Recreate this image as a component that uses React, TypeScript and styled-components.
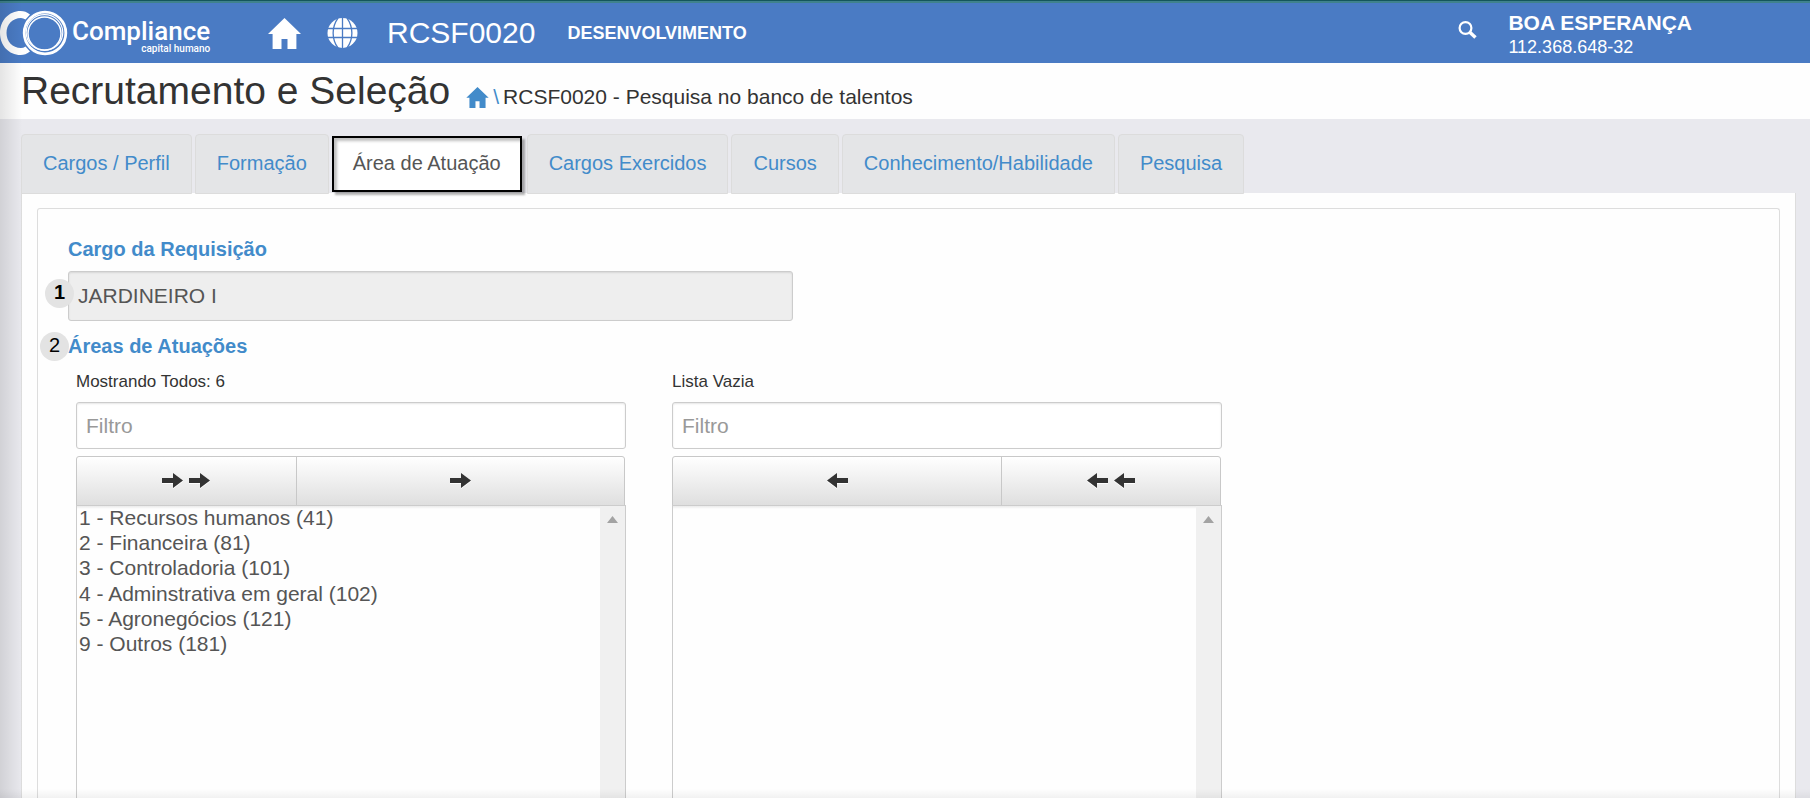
import React, { useState } from "react";
import styled, { createGlobalStyle, css } from "styled-components";

const GlobalStyle = createGlobalStyle`
  *, *::before, *::after { box-sizing: border-box; }
  body {
    margin: 0;
    background: #e9e9ee;
    color: #333;
    font-family: "Liberation Sans", Arial, sans-serif;
  }
  button, input, select { font-family: inherit; }
`;

const Page = styled.div`
  position: relative;
  display: flex;
  flex-direction: column;
  height: 100vh;
  overflow: hidden;
`;

/* Soft shade along the left and bottom edges of the window */
const EdgeShade = styled.div`
  position: absolute;
  inset: 0;
  pointer-events: none;
  background:
    linear-gradient(to right, rgba(0, 0, 0, 0.1), rgba(0, 0, 0, 0) 22px),
    linear-gradient(to top, rgba(0, 0, 0, 0.05), rgba(0, 0, 0, 0) 9px);
`;

const TopStrip = styled.div`
  flex: none;
  height: 3px;
  background: #3f828c;
  border-top: 1px solid #14565c;
`;

const Header = styled.header`
  flex: none;
  display: flex;
  align-items: center;
  height: 60px;
  padding-right: 118px;
  background: #4a7bc4;
  color: #fff;
`;

const Brand = styled.a`
  display: flex;
  align-items: center;
  gap: 4px;
  width: 268px;
  color: #fff;
  text-decoration: none;
`;

const BrandText = styled.span`
  display: flex;
  flex-direction: column;
  align-items: flex-end;
  padding-top: 5px;
  font-family: Roboto, "Liberation Sans", sans-serif;
  font-weight: 500;
`;

const BrandName = styled.span`
  font-size: 26px;
  line-height: 26px;
`;

const BrandTag = styled.span`
  font-size: 10px;
  line-height: 10px;
`;

const IconLink = styled.a`
  display: flex;
  color: inherit;
`;

const HeaderLinks = styled.nav`
  display: flex;
  align-items: center;
  gap: 26px;
  margin-right: 29px;
`;

const ProgramCode = styled.span`
  margin-right: 32px;
  font-size: 30px;
  line-height: 36px;
`;

const Environment = styled.strong`
  font-size: 18px;
  line-height: 24px;
`;

const UserArea = styled.div`
  display: flex;
  align-items: flex-start;
  gap: 31px;
  margin-left: auto;
  padding-top: 4px;
`;

const SearchButton = styled.button`
  display: flex;
  margin: 0;
  padding: 10px 0 0;
  border: 0;
  background: none;
  color: inherit;
`;

const UserInfo = styled.div`
  display: flex;
  flex-direction: column;
`;

const UserName = styled.strong`
  font-size: 21px;
  line-height: 24px;
`;

const UserDoc = styled.span`
  font-size: 18px;
  line-height: 24px;
`;

const TitleBar = styled.div`
  flex: none;
  display: flex;
  align-items: baseline;
  gap: 16px;
  height: 56px;
  padding-left: 21px;
  background: #fefefe;
`;

const Title = styled.h1`
  margin: 0;
  font-size: 39px;
  font-weight: 400;
  line-height: 56px;
`;

const Breadcrumb = styled.nav`
  display: flex;
  align-items: baseline;
  gap: 4px;
  font-size: 21px;
  color: #333;
`;

const CrumbLink = styled.a`
  color: #428bca;
  text-decoration: none;
  display: flex;
  align-items: baseline;
  gap: 4px;
  svg { align-self: center; }
`;

const Content = styled.main`
  flex: 1;
  display: flex;
  flex-direction: column;
  min-height: 0;
  padding: 15px 14px 0 21px;
`;

const Tabs = styled.div`
  flex: none;
  display: flex;
  align-items: center;
  gap: 3px;
  height: 60px;
  margin-bottom: -1px;
  z-index: 1;
`;

const Tab = styled.button<{ $active: boolean }>`
  height: 60px;
  margin: 0;
  padding: 0 21px 2px;
  border: 1px solid #dcdcdc;
  border-radius: 4px 4px 0 0;
  background: #e4e5e7;
  color: #428bca;
  font-size: 20px;
  line-height: 28px;
  white-space: nowrap;
  ${(p) =>
    p.$active &&
    css`
      height: 56px;
      margin-right: 2px;
      padding: 0 19px 2px;
      border: 2px solid #000;
      border-radius: 0;
      background: #fff;
      color: #555;
      box-shadow: 3px 3px 2px rgba(0, 0, 0, 0.3), inset 3px 3px 3px rgba(0, 0, 0, 0.25);
    `}
`;

const TabPanel = styled.section`
  flex: 1;
  display: flex;
  min-height: 0;
  padding: 15px 15px 0;
  border: solid #ddd;
  border-width: 0 1px;
  background: #fefefe;
`;

const Form = styled.form`
  flex: 1;
  display: flex;
  flex-direction: column;
  min-height: 0;
  padding: 26px 30px 0;
  border: solid #ddd;
  border-width: 1px 1px 0;
  border-radius: 3px 3px 0 0;
`;

const FieldLabel = styled.label`
  position: relative;
  align-self: flex-start;
  color: #428bca;
  font-size: 20px;
  font-weight: 700;
  line-height: 28px;
`;

const GroupHeading = styled(FieldLabel).attrs({ as: "h2" })`
  margin: 11px 0 10px;
`;

const FieldBox = styled.div`
  position: relative;
  display: flex;
  max-width: 725px;
  margin-top: 8px;
`;

const TextInput = styled.input`
  width: 100%;
  height: 47px;
  margin: 0;
  padding: 0 9px;
  border: 1px solid #ccc;
  border-radius: 3px;
  background: #fff;
  box-shadow: inset 0 1px 2px rgba(0, 0, 0, 0.1);
  color: #555;
  font-size: 21px;
  &::placeholder { color: #999; opacity: 1; }
  &:read-only { height: 50px; background: #eee; }
`;

const Badge = styled.span<{ $bold?: boolean }>`
  position: absolute;
  top: ${(p) => (p.$bold ? 8 : 0)}px;
  left: ${(p) => (p.$bold ? -23 : -28)}px;
  display: flex;
  justify-content: center;
  width: 29px;
  height: 29px;
  border-radius: 50%;
  background: #e3e3e3;
  color: #000;
  font-size: 20px;
  font-weight: ${(p) => (p.$bold ? 700 : 400)};
  line-height: 27px;
`;

const DualList = styled.div`
  flex: 1;
  display: grid;
  grid-template-columns: 1fr 1fr;
  gap: 46px;
  min-height: 0;
  max-width: 1154px;
  padding-left: 8px;
`;

const ListColumn = styled.div`
  display: flex;
  flex-direction: column;
  min-width: 0;
  min-height: 0;
`;

const ListInfo = styled.label`
  margin-bottom: 8px;
  font-size: 17px;
  line-height: 24px;
`;

const MoveBar = styled.div<{ $reverse?: boolean }>`
  flex: none;
  display: grid;
  grid-template-columns: ${(p) => (p.$reverse ? "3fr 2fr" : "2fr 3fr")};
  height: 50px;
  margin: 7px 1px -1px 0;
  border: 1px solid #c8c8c8;
  border-radius: 3px 3px 0 0;
  background: linear-gradient(#fff, #dfdfdf);
`;

const MoveButton = styled.button`
  display: flex;
  align-items: center;
  justify-content: center;
  gap: 6px;
  margin: 0;
  padding: 0;
  border: 0;
  background: none;
  color: #333;
  & + & { border-left: 1px solid #c8c8c8; }
  svg { filter: drop-shadow(0 1px 0 #fff); }
`;

const ListBox = styled.div`
  flex: 1;
  display: flex;
  min-height: 0;
  border: 1px solid #ccc;
  border-bottom: 0;
  background: linear-gradient(rgba(0, 0, 0, 0.08), rgba(0, 0, 0, 0) 3px);
`;

const Options = styled.select`
  flex: 1;
  min-width: 0;
  height: 100%;
  margin: 0;
  padding: 0;
  border: 0;
  outline: 0;
  background: transparent;
  color: #555;
  font-size: 21px;
  scrollbar-width: none;
`;

const ScrollTrack = styled.div`
  display: flex;
  justify-content: center;
  width: 25px;
  padding-top: 10px;
  background: #f0f0f0;
`;

const HomeIcon = ({ size }: { size: number }) => (
  <svg width={size} height={size - 2} viewBox="0 0 33 31" fill="currentColor" aria-hidden="true">
    <path d="M16.500 0 33 16h-4.600v15H19.500V21h-6v10H4.600V16H0z" />
  </svg>
);

const GlobeIcon = () => (
  <svg width="31" height="30" viewBox="0 0 31 30" aria-hidden="true">
    <circle cx="15.500" cy="15" r="15" fill="#fff" />
    <g fill="none" stroke="#4a7bc4" strokeWidth="1.300">
      <path d="M15.500 0v30M0 10.500h31M0 19.500h31" />
      <path d="M11 0C4.500 9 4.500 21 11 30M20 0c6.500 9 6.500 21 0 30" />
    </g>
  </svg>
);

const SearchIcon = () => (
  <svg width="19" height="18" viewBox="0 0 19 18" fill="none" stroke="currentColor" aria-hidden="true">
    <circle cx="7.500" cy="7" r="5.900" strokeWidth="2.200" />
    <path d="M11.800 11.200 17.500 16.500" strokeWidth="3.400" />
  </svg>
);

const BrandMark = () => (
  <svg width="68" height="46" viewBox="0 0 68 46" fill="none" aria-hidden="true">
    <path d="M30 4.500C27 2 24 1 20.500 1 9 1 0 10.500 0 23s9 22 20.500 22c3.500 0 6.500-1 9.500-3.500l-4.500-5C24 37.500 22.500 38 21 38 12.500 38 6.500 31.500 6.500 23S12.500 8 21 8c1.500 0 3 .5 4.500 1.500z" fill="#fff" />
    <circle cx="45" cy="23" r="20.800" stroke="#fff" strokeWidth="2.800" />
    <ellipse cx="44.500" cy="22.500" rx="18.300" ry="17.800" stroke="#fff" strokeWidth="1.200" />
    <circle cx="44.500" cy="23.500" r="16.500" stroke="#fff" strokeWidth="1.500" />
  </svg>
);

const Arrow = ({ left = false }: { left?: boolean }) => (
  <svg width="21" height="16" viewBox="0 0 21 16" fill="currentColor" aria-hidden="true">
    <path d={left ? "M21 5H10V0L0 7.500 10 15v-5h11z" : "M0 5h11V0l10 7.500L11 15v-5H0z"} />
  </svg>
);

const ScrollArrow = () => (
  <svg width="11" height="7" viewBox="0 0 11 7" fill="#a3a3a3" aria-hidden="true">
    <path d="M5.500 0 11 7H0z" />
  </svg>
);

const tabNames = [
  "Cargos / Perfil",
  "Formação",
  "Área de Atuação",
  "Cargos Exercidos",
  "Cursos",
  "Conhecimento/Habilidade",
  "Pesquisa",
];

const areas = [
  "1 - Recursos humanos (41)",
  "2 - Financeira (81)",
  "3 - Controladoria (101)",
  "4 - Adminstrativa em geral (102)",
  "5 - Agronegócios (121)",
  "9 - Outros (181)",
];

export default function App() {
  const [active, setActive] = useState("Área de Atuação");

  return (
    <Page>
      <GlobalStyle />
      <TopStrip />
      <Header>
        <Brand href="#">
          <BrandMark />
          <BrandText>
            <BrandName>Compliance</BrandName>
            <BrandTag>capital humano</BrandTag>
          </BrandText>
        </Brand>
        <HeaderLinks>
          <IconLink href="#" aria-label="Início">
            <HomeIcon size={33} />
          </IconLink>
          <IconLink href="#" aria-label="Idioma">
            <GlobeIcon />
          </IconLink>
        </HeaderLinks>
        <ProgramCode>RCSF0020</ProgramCode>
        <Environment>DESENVOLVIMENTO</Environment>
        <UserArea>
          <SearchButton type="button" aria-label="Pesquisar">
            <SearchIcon />
          </SearchButton>
          <UserInfo>
            <UserName>BOA ESPERANÇA</UserName>
            <UserDoc>112.368.648-32</UserDoc>
          </UserInfo>
        </UserArea>
      </Header>

      <TitleBar>
        <Title>Recrutamento e Seleção</Title>
        <Breadcrumb>
          <CrumbLink href="#" aria-label="Início">
            <HomeIcon size={23} />
            <span>\</span>
          </CrumbLink>
          <span>RCSF0020 - Pesquisa no banco de talentos</span>
        </Breadcrumb>
      </TitleBar>

      <Content>
        <Tabs role="tablist">
          {tabNames.map((name) => (
            <Tab
              key={name}
              type="button"
              role="tab"
              aria-selected={name === active}
              $active={name === active}
              onClick={() => setActive(name)}
            >
              {name}
            </Tab>
          ))}
        </Tabs>
        <TabPanel>
          <Form>
            <FieldLabel htmlFor="cargo">Cargo da Requisição</FieldLabel>
            <FieldBox>
              <TextInput id="cargo" readOnly value="JARDINEIRO I" />
              <Badge $bold>1</Badge>
            </FieldBox>
            <GroupHeading>
              Áreas de Atuações
              <Badge>2</Badge>
            </GroupHeading>
            <DualList>
              <ListColumn>
                <ListInfo htmlFor="disponiveis">Mostrando Todos: 6</ListInfo>
                <TextInput placeholder="Filtro" aria-label="Filtrar áreas disponíveis" />
                <MoveBar>
                  <MoveButton type="button" aria-label="Mover todos">
                    <Arrow />
                    <Arrow />
                  </MoveButton>
                  <MoveButton type="button" aria-label="Mover selecionados">
                    <Arrow />
                  </MoveButton>
                </MoveBar>
                <ListBox>
                  <Options id="disponiveis" multiple>
                    {areas.map((area) => (
                      <option key={area}>{area}</option>
                    ))}
                  </Options>
                  <ScrollTrack>
                    <ScrollArrow />
                  </ScrollTrack>
                </ListBox>
              </ListColumn>
              <ListColumn>
                <ListInfo htmlFor="selecionadas">Lista Vazia</ListInfo>
                <TextInput placeholder="Filtro" aria-label="Filtrar áreas selecionadas" />
                <MoveBar $reverse>
                  <MoveButton type="button" aria-label="Remover selecionados">
                    <Arrow left />
                  </MoveButton>
                  <MoveButton type="button" aria-label="Remover todos">
                    <Arrow left />
                    <Arrow left />
                  </MoveButton>
                </MoveBar>
                <ListBox>
                  <Options id="selecionadas" multiple />
                  <ScrollTrack>
                    <ScrollArrow />
                  </ScrollTrack>
                </ListBox>
              </ListColumn>
            </DualList>
          </Form>
        </TabPanel>
      </Content>
      <EdgeShade />
    </Page>
  );
}
